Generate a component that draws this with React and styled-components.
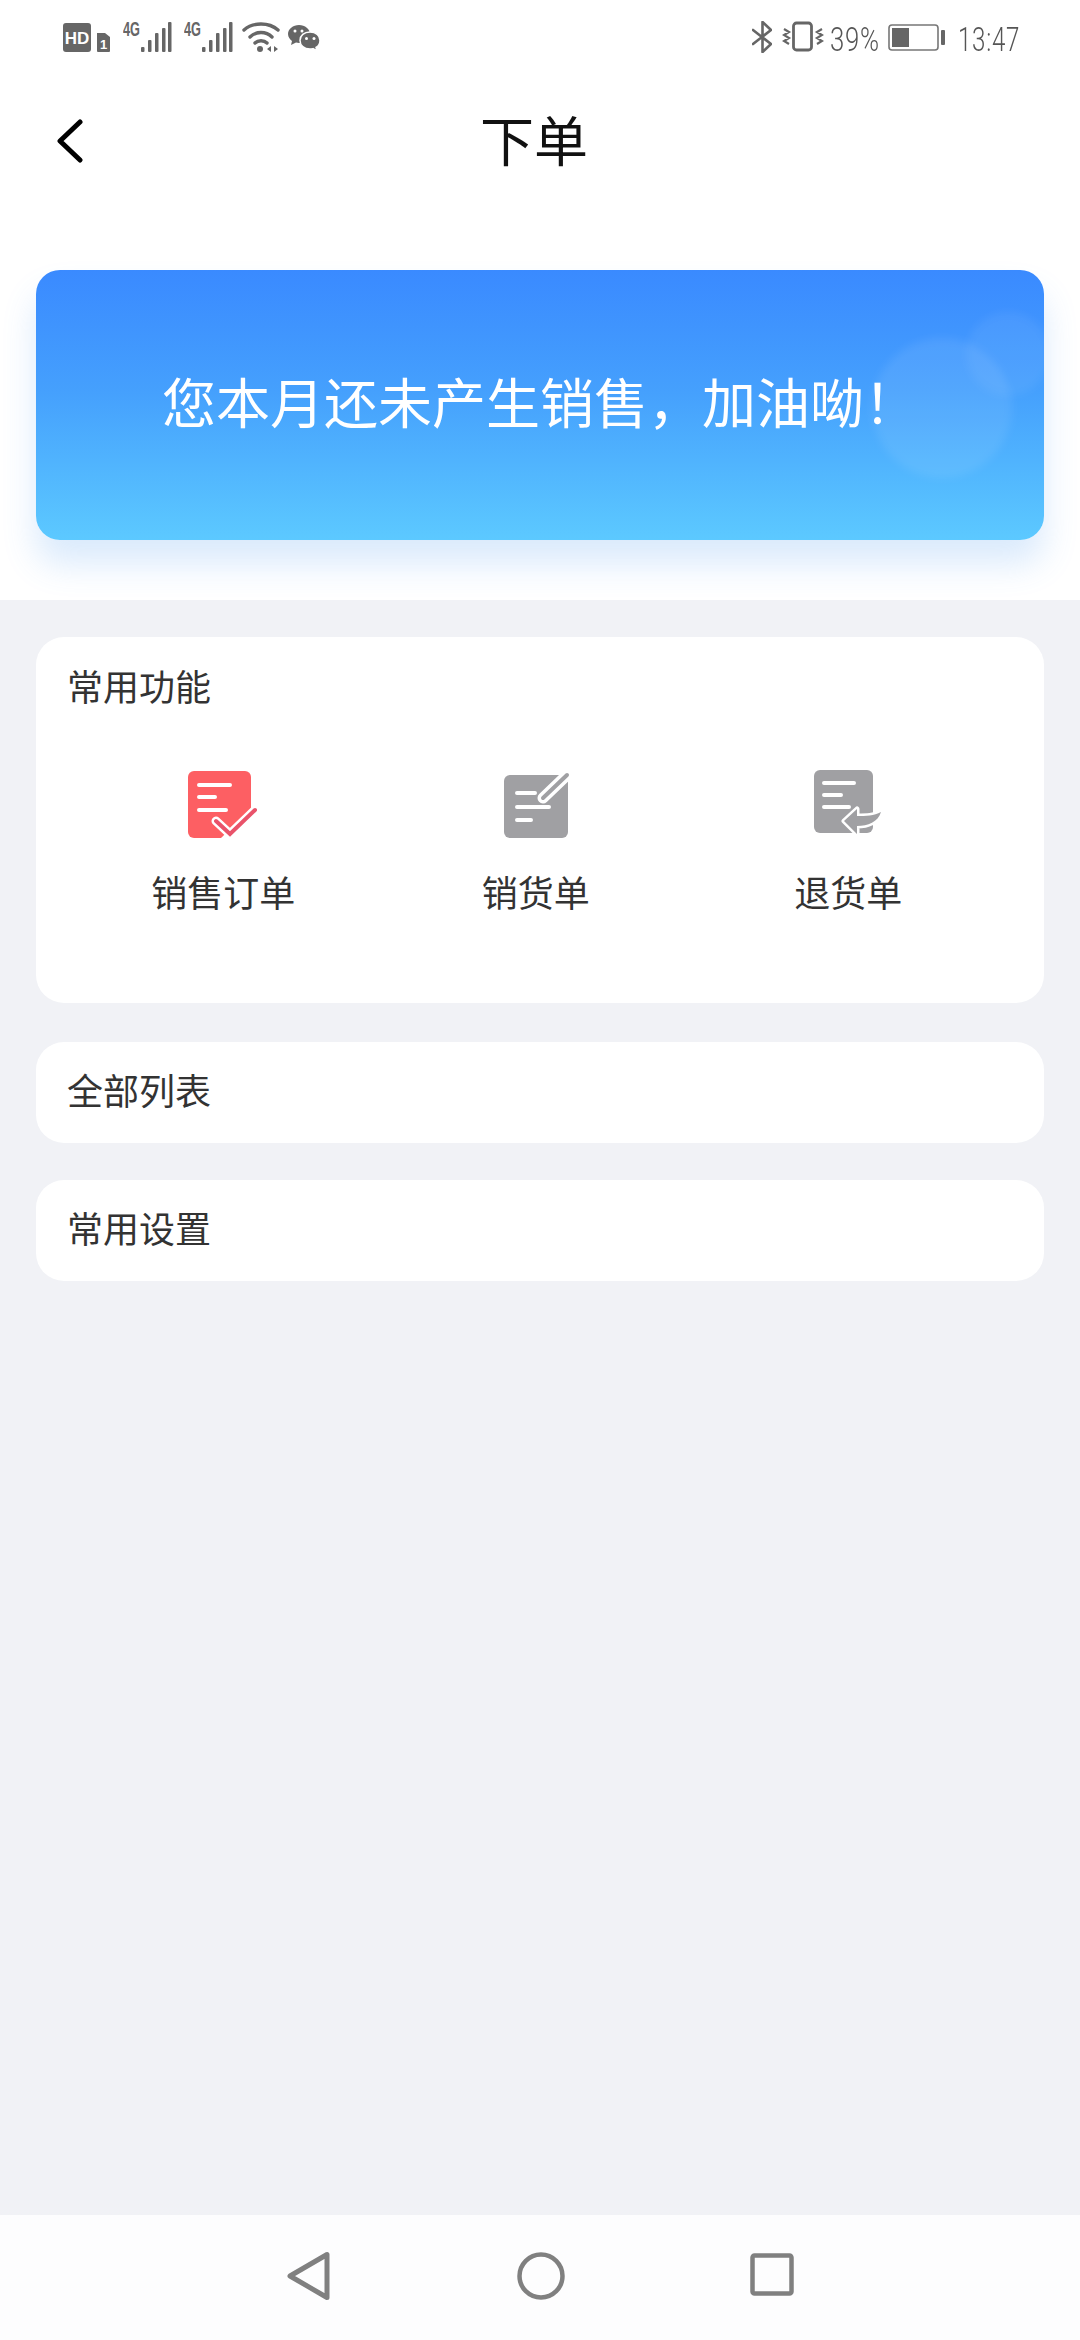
import React from "react";
import styled, { createGlobalStyle } from "styled-components";

const GlobalStyle = createGlobalStyle`
  html, body { margin: 0; padding: 0; background: #fff; }
  body { font-family: "Noto Sans CJK SC", "Liberation Sans", sans-serif; }
`;

const Page = styled.div`
  width: 1080px;
  height: 2340px;
  display: flex;
  flex-direction: column;
  background: #fff;
  overflow: hidden;
`;

const StatusBar = styled.div`
  height: 75px;
  flex: none;
  box-sizing: border-box;
  padding: 21px 64px 0 63px;
  display: flex;
  justify-content: space-between;
  align-items: flex-start;
`;

const StatusGroup = styled.div`
  display: flex;
  align-items: flex-start;
`;

const StatusIcon = styled.svg`
  display: block;
  flex: none;
  margin-left: ${(p) => p.$left || 0}px;
`;

const SignalIcon = styled(StatusIcon)`
  margin-top: -6px;
`;

const StatusText = styled.span`
  display: block;
  flex: none;
  width: ${(p) => p.$width}px;
  margin-left: ${(p) => p.$left || 0}px;
  font-family: "Roboto", sans-serif;
  font-weight: 300;
  font-size: 33px;
  line-height: 32px;
  letter-spacing: 1px;
  margin-top: 3px;
  color: #555;
  white-space: nowrap;
  transform: scaleX(${(p) => p.$scale});
  transform-origin: left center;
`;

const Header = styled.div`
  height: 120px;
  flex: none;
  box-sizing: border-box;
  padding: 12px 0 0 56px;
  display: flex;
  align-items: center;
`;

const BackIcon = styled.svg`
  display: block;
  flex: none;
`;

const Title = styled.h1`
  margin: -4px 0 0 396px;
  font-size: 54px;
  line-height: 70px;
  font-weight: 400;
  color: #111;
`;

const BannerWrap = styled.div`
  flex: none;
  height: 405px;
  box-sizing: border-box;
  padding: 75px 36px 0;
`;

const Banner = styled.div`
  position: relative;
  height: 270px;
  border-radius: 24px;
  overflow: hidden;
  display: flex;
  align-items: center;
  justify-content: center;
  padding-bottom: 8px;
  box-sizing: border-box;
  background: linear-gradient(180deg, #3a8aff 0%, #45a0fd 45%, #5cc9ff 100%);
`;

const BannerShadow = styled.div`
  border-radius: 24px;
  box-shadow: 0 24px 34px rgba(70, 150, 240, 0.2);
`;

const BannerText = styled.div`
  position: relative;
  font-size: 54px;
  line-height: 70px;
  color: #fff;
  font-weight: 400;
  white-space: nowrap;
`;

const Bubble = styled.div`
  position: absolute;
  left: ${(p) => p.$left}px;
  top: ${(p) => p.$top}px;
  width: ${(p) => p.$size}px;
  height: ${(p) => p.$size}px;
  border-radius: 50%;
  background: rgba(255, 255, 255, ${(p) => p.$alpha});
  filter: blur(4px);
`;

const Main = styled.div`
  flex: 1;
  box-sizing: border-box;
  padding: 37px 36px 0;
  background: #f1f2f6;
  display: flex;
  flex-direction: column;
  gap: 37px;
`;

const Card = styled.div`
  background: #fff;
  border-radius: 28px;
  box-sizing: border-box;
  padding: ${(p) => (p.$tall ? "22px 0 0" : "0 0 7px")};
  height: ${(p) => (p.$tall ? "366px" : "101px")};
  display: ${(p) => (p.$tall ? "block" : "flex")};
  align-items: center;
  margin-bottom: ${(p) => (p.$tall ? "2px" : "0")};
`;

const CardTitle = styled.div`
  font-size: 36px;
  line-height: 52px;
  padding-left: 31px;
  color: #333;
`;

const Actions = styled.div`
  display: grid;
  grid-template-columns: repeat(3, 312.5px);
  padding: 59px 0 0 31px;
`;

const Action = styled.div`
  display: flex;
  flex-direction: column;
  align-items: center;
`;

const ActionIcon = styled.svg`
  display: block;
  height: 70px;
`;

const ActionLabel = styled.div`
  margin-top: 25px;
  font-size: 36px;
  line-height: 52px;
  color: #333;
`;

const NavBar = styled.div`
  flex: none;
  height: 125px;
  box-sizing: border-box;
  background: #fdfdfe;
  padding: 36px 0 0 286px;
  display: flex;
  align-items: flex-start;
`;

const NavIcon = styled.svg`
  display: block;
  flex: none;
  margin-left: ${(p) => p.$left || 0}px;
`;

const Badge = () => (
  <StatusIcon width="47" height="32" viewBox="0 0 47 32">
    <rect x="0" y="2" width="28" height="29" rx="3" fill="#666" />
    <text x="14" y="23" textAnchor="middle" fontFamily="Liberation Sans, sans-serif" fontWeight="700" fontSize="17" fill="#fff">HD</text>
    <path d="M34 12h8l5 4v14a1 1 0 0 1-1 1H35a1 1 0 0 1-1-1z" fill="#666" />
    <text x="40.500" y="28" textAnchor="middle" fontFamily="Liberation Sans, sans-serif" fontWeight="700" fontSize="13" fill="#fff">1</text>
  </StatusIcon>
);

const Signal = ({ left }) => (
  <SignalIcon width="49" height="38" viewBox="0 -6 49 38" $left={left}>
    <text x="0" y="15" fontFamily="Liberation Sans, sans-serif" fontWeight="700" fontSize="20" fill="#666" textLength="17" lengthAdjust="spacingAndGlyphs">4G</text>
    <g fill="#666">
      <rect x="18" y="26" width="3.500" height="5" rx="1" />
      <rect x="25" y="19" width="3.500" height="12" rx="1" />
      <rect x="32" y="12" width="3.500" height="19" rx="1" />
      <rect x="39" y="7" width="3.500" height="24" rx="1" />
      <rect x="45" y="1" width="3.500" height="30" rx="1" />
    </g>
  </SignalIcon>
);

const Wifi = () => (
  <StatusIcon width="38" height="32" viewBox="0 0 38 32" $left={9}>
    <g fill="none" stroke="#666" strokeWidth="3.400" strokeLinecap="round">
      <path d="M2 9C11 1 27 1 36 9" />
      <path d="M8 16C14 10 24 10 30 16" />
      <path d="M13 22C16 19 22 19 25 22" />
    </g>
    <circle cx="18" cy="28" r="3" fill="#666" />
    <path d="M29 25v6l-4-3zM32 25v6l4-3z" fill="#666" />
  </StatusIcon>
);

const Wechat = () => (
  <StatusIcon width="32" height="32" viewBox="0 0 32 32" $left={8}>
    <path d="M11 4C5 4 0 8 0 13c0 3 2 5.500 4 7l-1 4 5-2.500c1 .3 2 .4 3 .4C17 22 22 18 22 13S17 4 11 4z" fill="#666" />
    <path d="M22 11c-6 0-10 3.600-10 8.500S16 28 22 28c1 0 2-.1 3-.4l4 2.400-1-3.600c2.500-1.500 4-4 4-7 0-4.900-4-8.400-10-8.400z" fill="#666" stroke="#fff" strokeWidth="1.500" />
    <circle cx="7" cy="10" r="1.500" fill="#fff" />
    <circle cx="14" cy="10" r="1.500" fill="#fff" />
    <circle cx="18.500" cy="17.500" r="1.500" fill="#fff" />
    <circle cx="26" cy="17.500" r="1.500" fill="#fff" />
  </StatusIcon>
);

const Bluetooth = () => (
  <StatusIcon width="20" height="32" viewBox="0 0 20 32">
    <path d="M1 9l18 14-8.500 8V1L19 9 1 23" fill="none" stroke="#666" strokeWidth="2.600" strokeLinecap="round" strokeLinejoin="round" />
  </StatusIcon>
);

const Vibrate = () => (
  <StatusIcon width="42" height="32" viewBox="0 0 42 32" $left={10}>
    <rect x="11.500" y="2" width="18" height="27" rx="3" fill="none" stroke="#666" strokeWidth="2.800" />
    <path d="M2 8l5 3-5 3 5 3-5 3 5 3M40 8l-5 3 5 3-5 3 5 3-5 3" fill="none" stroke="#666" strokeWidth="2.200" />
  </StatusIcon>
);

const Battery = () => (
  <StatusIcon width="58" height="30" viewBox="0 0 58 30" $left={-8}>
    <rect x="1" y="4" width="49" height="25" rx="3" fill="none" stroke="#777" strokeWidth="1.600" />
    <rect x="4" y="7" width="17" height="19" fill="#666" />
    <rect x="53" y="9" width="4" height="15" rx="1" fill="#666" />
  </StatusIcon>
);

const OrderIcon = () => (
  <ActionIcon viewBox="0 0 70 70" width="70">
    <path d="M6 1h51a6 6 0 0 1 6 6v32L33 68H6a6 6 0 0 1-6-6V7a6 6 0 0 1 6-6z" fill="#fd5f63" />
    <g stroke="#fff" strokeWidth="4" strokeLinecap="round" fill="none">
      <path d="M11 15h31M11 27h16M11 40h27" />
      <path d="M28 51l14 13 25-24" strokeWidth="9" />
    </g>
    <path d="M28 51l14 13 25-24" stroke="#e9536a" strokeWidth="4" fill="none" strokeLinecap="round" />
  </ActionIcon>
);

const SaleIcon = () => (
  <ActionIcon viewBox="0 0 70 70" width="70">
    <rect x="3" y="5" width="64" height="63" rx="6" fill="#a0a0a3" />
    <g stroke="#fff" strokeLinecap="round" fill="none">
      <path d="M16 23h18M16 37h32M16 50h14" strokeWidth="4" />
      <path d="M42 28L66 5" strokeWidth="11" />
    </g>
    <path d="M42 28L66 5" stroke="#a0a0a3" strokeWidth="4" strokeLinecap="round" />
  </ActionIcon>
);

const ReturnIcon = () => (
  <ActionIcon viewBox="0 0 70 70" width="70">
    <rect x="1" y="0" width="59" height="63" rx="6" fill="#a0a0a3" />
    <path d="M11 13h30M11 25h17M11 37h25" stroke="#fff" strokeWidth="4" strokeLinecap="round" fill="none" />
    <path d="M31 51l13-12v7c9 0 17 0 24-4-3 10-13 14-24 14v8z" fill="#a0a0a3" stroke="#fff" strokeWidth="5" paintOrder="stroke" strokeLinejoin="round" />
  </ActionIcon>
);

const actions = [
  { label: "销售订单", icon: <OrderIcon /> },
  { label: "销货单", icon: <SaleIcon /> },
  { label: "退货单", icon: <ReturnIcon /> },
];

export default function App() {
  return (
    <Page>
      <GlobalStyle />
      <StatusBar>
        <StatusGroup>
          <Badge />
          <Signal left={13} />
          <Signal left={12} />
          <Wifi />
          <Wechat />
        </StatusGroup>
        <StatusGroup>
          <Bluetooth />
          <Vibrate />
          <StatusText $width={66} $left={6} $scale={0.78}>39%</StatusText>
          <Battery />
          <StatusText $width={58} $left={12} $scale={0.73}>13:47</StatusText>
        </StatusGroup>
      </StatusBar>
      <Header>
        <BackIcon width="28" height="44" viewBox="0 0 28 44">
          <path d="M24 3L4 22l20 19" fill="none" stroke="#000" strokeWidth="5" strokeLinecap="round" strokeLinejoin="round" />
        </BackIcon>
        <Title>下单</Title>
      </Header>
      <BannerWrap>
        <BannerShadow>
          <Banner>
            <Bubble $left={836} $top={68} $size={140} $alpha={0.08} />
            <Bubble $left={930} $top={42} $size={84} $alpha={0.06} />
            <BannerText>您本月还未产生销售，加油呦！</BannerText>
          </Banner>
        </BannerShadow>
      </BannerWrap>
      <Main>
        <Card $tall>
          <CardTitle>常用功能</CardTitle>
          <Actions>
            {actions.map((a) => (
              <Action key={a.label}>
                {a.icon}
                <ActionLabel>{a.label}</ActionLabel>
              </Action>
            ))}
          </Actions>
        </Card>
        <Card><CardTitle>全部列表</CardTitle></Card>
        <Card><CardTitle>常用设置</CardTitle></Card>
      </Main>
      <NavBar>
        <NavIcon width="46" height="50" viewBox="0 0 46 50">
          <path d="M41 3.500v43L4 25z" fill="none" stroke="#808080" strokeWidth="5" strokeLinejoin="round" />
        </NavIcon>
        <NavIcon width="48" height="50" viewBox="0 0 48 50" $left={185}>
          <circle cx="24" cy="25" r="21.500" fill="none" stroke="#808080" strokeWidth="4.500" />
        </NavIcon>
        <NavIcon width="44" height="46" viewBox="0 0 44 46" $left={185}>
          <rect x="2.500" y="4.500" width="39" height="38" rx="2" fill="none" stroke="#808080" strokeWidth="4.500" />
        </NavIcon>
      </NavBar>
    </Page>
  );
}
